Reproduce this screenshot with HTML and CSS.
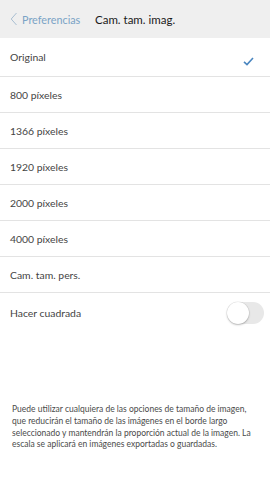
FILE: index.html
```html
<!DOCTYPE html>
<html>
  <head>
    <meta charset="utf-8">
    <link rel="stylesheet" href="styles.css">
  </head>
  <body>
    <div class="nav">
      <div class="nav__back">
        <svg class="nav__chevron" width="8" height="14" viewBox="0 0 8 14">
          <path d="M6.5 1 L1.2 7 L6.5 13" fill="none" stroke="#a9bfd2" stroke-width="1"/>
        </svg>
        <span>Preferencias</span>
      </div>
      <div class="nav__title">Cam. tam. imag.</div>
    </div>

    <ul class="options">
      <li class="options__row options__row--first">
        <span>Original</span>
        <svg class="options__check" width="11" height="9" viewBox="0 0 11 9">
          <path d="M1 4.8 L4 7.6 L10 1" fill="none" stroke="#4a86c0" stroke-width="1.6"/>
        </svg>
      </li>
      <li class="options__row">800 píxeles</li>
      <li class="options__row">1366 píxeles</li>
      <li class="options__row">1920 píxeles</li>
      <li class="options__row">2000 píxeles</li>
      <li class="options__row">4000 píxeles</li>
      <li class="options__row">Cam. tam. pers.</li>
      <li class="options__row options__row--last">
        <span>Hacer cuadrada</span>
        <div class="toggle"><div class="toggle__knob"></div></div>
      </li>
    </ul>

    <p class="note">
      Puede utilizar cualquiera de las opciones de tamaño de imagen,
      que reducirán el tamaño de las imágenes en el borde largo
      seleccionado y mantendrán la proporción actual de la imagen. La
      escala se aplicará en imágenes exportadas o guardadas.
    </p>
  </body>
</html>
```

FILE: styles.css
```css
html, body {
  margin: 0;
  padding: 0;
  background: #fff;
}
body {
  font-family: "Lato", "Noto Sans", sans-serif;
  color: #444;
  width: 270px;
}

.nav {
  height: 38px;
  background: #efefef;
  display: flex;
  align-items: center;
  font-size: 11.5px;
}
.nav__back {
  display: flex;
  align-items: center;
  padding-left: 10px;
  width: 85px;
  color: #7aa3c6;
  font-size: 10.8px;
}
.nav__chevron {
  margin-right: 4px;
}
.nav__title {
  color: #1a1a1a;
}

.options {
  list-style: none;
  margin: 0;
  padding: 0;
}
.options__row {
  height: 36px;
  border-bottom: 1px solid #e3e3e3;
  display: flex;
  align-items: center;
  justify-content: space-between;
  padding: 0 6px 0 10px;
  font-size: 10.4px;
  box-sizing: border-box;
}
.options__row--first {
  height: 39px;
}
.options__check {
  margin: 8px 10px 0 0;
}
.options__row--last {
  border-bottom: none;
  height: 40px;
}

.toggle {
  width: 37px;
  height: 22px;
  border-radius: 11px;
  background: #e8e8e8;
  position: relative;
}
.toggle__knob {
  position: absolute;
  left: 0;
  top: 0;
  width: 22px;
  height: 22px;
  border-radius: 50%;
  background: #fff;
  box-shadow: 0 1px 2px rgba(0,0,0,.25), 0 0 0 .5px rgba(0,0,0,.08);
}

.note {
  margin: 71px 0 0 0;
  padding: 0 18px 0 12px;
  font-size: 8.5px;
  line-height: 11.8px;
  color: #4a4a4a;
}
```
